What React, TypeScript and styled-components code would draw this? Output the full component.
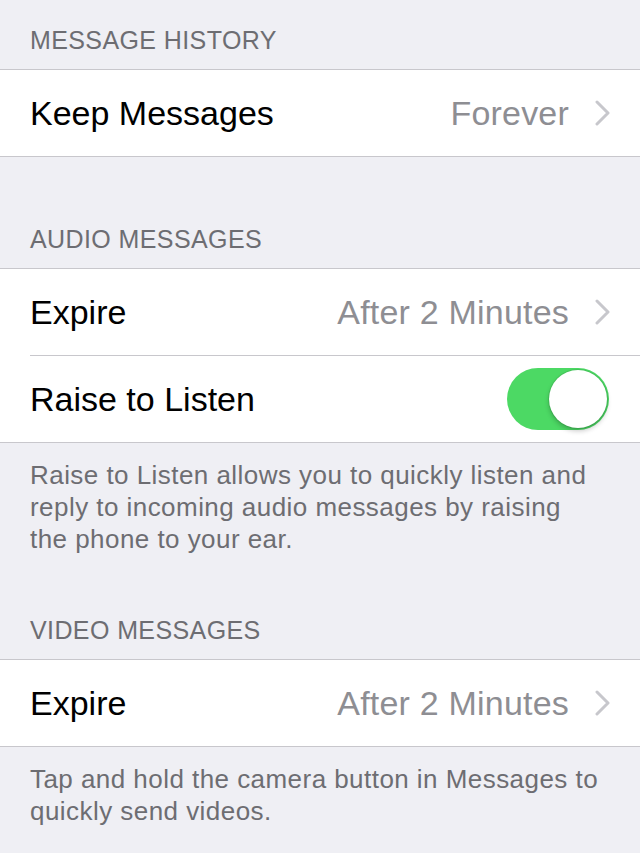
import React from 'react';
import styled, { createGlobalStyle } from 'styled-components';

const GlobalStyle = createGlobalStyle`
  html, body {
    margin: 0;
    padding: 0;
    background: #efeff4;
  }
  body {
    font-family: "Liberation Sans", Arial, Helvetica, sans-serif;
    -webkit-font-smoothing: antialiased;
  }
`;

const Page = styled.div`
  width: 640px;
  min-height: 853px;
  background: #efeff4;
  overflow: hidden;
`;

const SectionHeader = styled.div<{ $top: number }>`
  padding: ${({ $top }) => $top}px 30px 14px;
  font-size: 25px;
  line-height: 30px;
  color: #6d6d72;
  letter-spacing: 0.4px;
  text-transform: uppercase;
`;

const Group = styled.div`
  background: #ffffff;
  border-top: 1px solid #c8c7cc;
  border-bottom: 1px solid #c8c7cc;
`;

const Row = styled.div<{ $divider?: boolean }>`
  display: flex;
  align-items: center;
  height: 86px;
  padding-right: 30px;
  margin-left: 30px;
  border-top: ${({ $divider }) => ($divider ? '1px solid #c8c7cc' : 'none')};
`;

const Label = styled.span`
  flex: 1;
  font-size: 34px;
  line-height: 40px;
  color: #000000;
`;

const Value = styled.span`
  font-size: 34px;
  line-height: 40px;
  color: #8e8e93;
  letter-spacing: 0.2px;
  margin-right: 26px;
`;

const Footer = styled.div`
  padding: 16px 30px 0;
  font-size: 26px;
  line-height: 32px;
  letter-spacing: 0.45px;
  color: #6d6d72;
`;

const SwitchTrack = styled.div<{ $on: boolean }>`
  position: relative;
  width: 102px;
  height: 62px;
  border-radius: 31px;
  background: ${({ $on }) => ($on ? '#4cd964' : '#e5e5ea')};
  margin-right: 1px;
`;

const SwitchKnob = styled.div<{ $on: boolean }>`
  position: absolute;
  top: 2px;
  left: ${({ $on }) => ($on ? '42px' : '2px')};
  width: 58px;
  height: 58px;
  border-radius: 50%;
  background: #ffffff;
  box-shadow: 0 3px 5px rgba(0, 0, 0, 0.22), 0 0 0 1px rgba(0, 0, 0, 0.08);
`;

const Chevron = () => (
  <svg width="15" height="26" viewBox="0 0 15 26" fill="none">
    <path
      d="M2 2 L13 13 L2 24"
      stroke="#c7c7cc"
      strokeWidth="3"
      strokeLinecap="round"
      strokeLinejoin="round"
    />
  </svg>
);

const Switch: React.FC<{ on: boolean }> = ({ on }) => (
  <SwitchTrack $on={on}>
    <SwitchKnob $on={on} />
  </SwitchTrack>
);

const DisclosureRow: React.FC<{ label: string; value: string; divider?: boolean }> = ({
  label,
  value,
  divider,
}) => (
  <Row $divider={divider}>
    <Label>{label}</Label>
    <Value>{value}</Value>
    <Chevron />
  </Row>
);

export default function App() {
  return (
    <Page>
      <GlobalStyle />

      <SectionHeader $top={25}>Message History</SectionHeader>
      <Group>
        <DisclosureRow label="Keep Messages" value="Forever" />
      </Group>

      <SectionHeader $top={67}>Audio Messages</SectionHeader>
      <Group>
        <DisclosureRow label="Expire" value="After 2 Minutes" />
        <Row $divider>
          <Label>Raise to Listen</Label>
          <Switch on />
        </Row>
      </Group>
      <Footer>
        Raise to Listen allows you to quickly listen and
        <br />
        reply to incoming audio messages by raising
        <br />
        the phone to your ear.
      </Footer>

      <SectionHeader $top={60}>Video Messages</SectionHeader>
      <Group>
        <DisclosureRow label="Expire" value="After 2 Minutes" />
      </Group>
      <Footer>
        Tap and hold the camera button in Messages to
        <br />
        quickly send videos.
      </Footer>
    </Page>
  );
}
